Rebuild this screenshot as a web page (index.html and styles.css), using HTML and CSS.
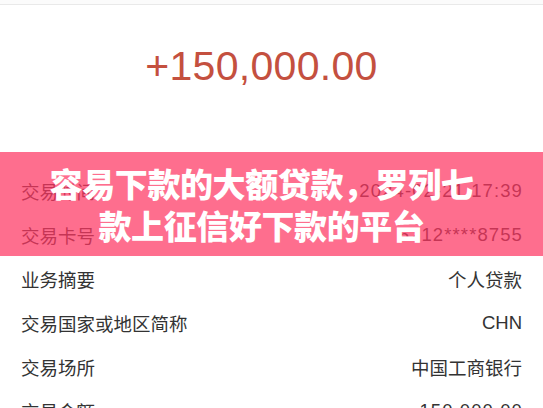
FILE: index.html
```html
<!DOCTYPE html>
<html lang="zh">
<head>
<meta charset="utf-8">
<link rel="stylesheet" href="styles.css">
</head>
<body>
<div class="page">
  <div class="topbar"></div>
  <div class="amount">+150,000.00</div>
  <div class="rows">
    <div class="row"><span>交易时间</span><span class="num">2024-02-21 17:39</span></div>
    <div class="row"><span>交易卡号</span><span class="num">6212****8755</span></div>
    <div class="row"><span>业务摘要</span><span>个人贷款</span></div>
    <div class="row"><span>交易国家或地区简称</span><span>CHN</span></div>
    <div class="row"><span>交易场所</span><span>中国工商银行</span></div>
    <div class="row"><span>交易金额</span><span class="num">150,000.00</span></div>
  </div>
  <div class="banner">
    <h1 class="title">容易下款的大额贷款，罗列七<br>款上征信好下款的平台</h1>
  </div>
</div>
</body>
</html>
```
FILE: styles.css
```css
html, body {
  margin: 0;
  padding: 0;
  background: #ffffff;
}
.page {
  position: relative;
  width: 543px;
  height: 408px;
  overflow: hidden;
  font-family: "Liberation Sans", "Noto Sans CJK SC", sans-serif;
}
.topbar {
  height: 4px;
  background: #fbfbfb;
  border-bottom: 1px solid #e9e9e9;
}
.amount {
  height: 127px;
  padding: 37px 20px 0 0;
  text-align: center;
  font-size: 41px;
  line-height: 48px;
  color: #c4503f;
  letter-spacing: 0.3px;
}
.rows {
  display: flex;
  flex-direction: column;
}
.row {
  height: 44px;
  padding: 0 21px;
  display: flex;
  justify-content: space-between;
  align-items: center;
  font-size: 18.5px;
  color: #333333;
}
.num {
  letter-spacing: 1.1px;
  margin-right: -1px;
}
.banner {
  position: absolute;
  left: 0;
  right: 0;
  top: 152px;
  height: 104px;
  padding-right: 20px;
  background: rgba(254, 54, 98, 0.72);
  display: flex;
  align-items: center;
  justify-content: center;
}
.title {
  margin: 0;
  font-family: "Noto Sans CJK SC", sans-serif;
  font-weight: 900;
  font-size: 33px;
  line-height: 42px;
  color: #ffffff;
  text-align: center;
  letter-spacing: -0.4px;
}
```
